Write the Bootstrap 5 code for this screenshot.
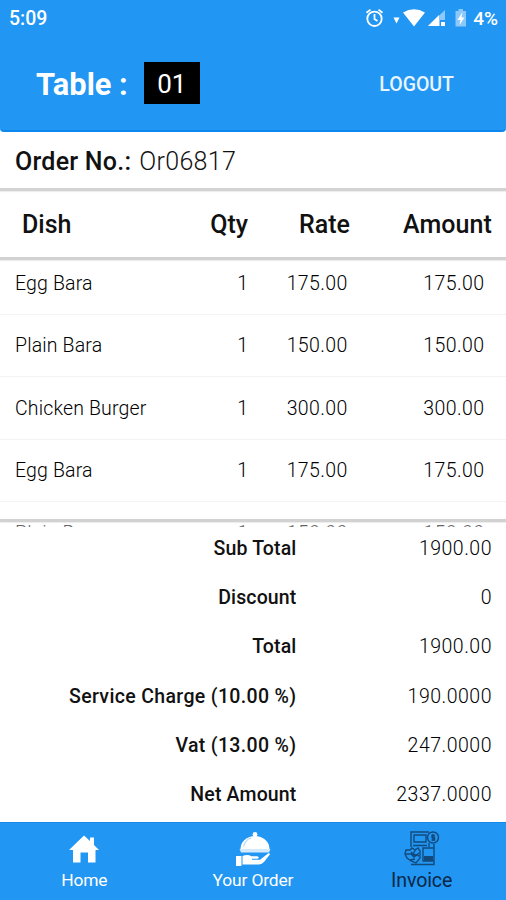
<!DOCTYPE html>
<html lang="en">
<head>
<meta charset="utf-8">
<meta name="viewport" content="width=device-width, initial-scale=1">
<title>Invoice</title>
<link href="https://cdn.jsdelivr.net/npm/bootstrap@5.3.0/dist/css/bootstrap.min.css" rel="stylesheet">
<style>
body{font-family:Roboto,"Liberation Sans",sans-serif;color:#111;background:#fff;line-height:1}
.screen{width:506px;height:900px}
.blue{background:#2196f3;color:#fff}
.status{height:35px;padding:2px 8px 0 9px;font-size:19.5px;font-weight:500}
.status .charge{font-size:19px}
.topbar{height:97px;padding:5px 52px 0 36px;border-bottom:2px solid #0d87f0;border-radius:0 0 4px 4px}
.title{font-size:30.8px;font-weight:700}
.table-no{background:#000;width:56px;height:42px;font-size:26px;margin:-5px 0 0 16px;padding-top:2px}
.logout{font-size:19.5px;font-weight:500;color:#e9f5ff}
.order-no{height:56px;padding:2px 15px 0;font-size:25px}
.order-no b{font-weight:500;letter-spacing:.25px}
.order-no span{font-weight:300;letter-spacing:.3px}
.rule{background:#d2d2d2;height:3px;box-shadow:0 1px 1px #ececec}
.cols{display:grid;grid-template-columns:150px 98px 102px 1fr;text-align:right}
.cols>:first-child{text-align:left}
.heads{height:66px;padding:1px 14px 0 0;font-size:25px;font-weight:500;align-items:center}
.heads>:first-child{padding-left:22px}
.heads>:last-child{letter-spacing:.1px}
.lines{height:259px}
.dish{height:62.35px;flex:none;padding:1px 21.5px 0 15px;grid-template-columns:135px 98.5px 99.3px 1fr;font-size:19.5px;font-weight:300;letter-spacing:.4px;align-items:center;border-bottom:1px solid #f3f3f3;color:#000}
.dish:first-child{height:55px;padding-bottom:7px}
.dish>:first-child{letter-spacing:.15px}
.peek{height:5px;opacity:.6}
.peek .dish{height:23px;border:0;padding-bottom:0}
.sums{height:295px}
.sum{height:49.1px;padding:0 14px 5px 0;font-size:19.5px}
.sum b{width:296.5px;text-align:right;font-weight:500;letter-spacing:.15px}
.sum b.rated{letter-spacing:.35px}
.sum span{font-weight:300;letter-spacing:.5px;color:#000}
.tabs{height:78px;border-top:1px solid #1689e8;font-size:17.4px}
.tab{width:33.333%;padding-top:7px}
.tab span{letter-spacing:-.15px}
.tab svg{display:block;margin-bottom:4px}
.tab.current{color:#0a2846;font-size:19.6px}
.tab.current svg{margin-bottom:3px}
</style>
<script src="https://cdn.jsdelivr.net/npm/bootstrap@5.3.0/dist/js/bootstrap.bundle.min.js"></script>
</head>
<body>
<div class="screen d-flex flex-column overflow-hidden">
  <header>
    <div class="status blue d-flex align-items-center justify-content-between">
      <span>5:09</span>
      <div class="d-flex align-items-center">
        <svg width="108" height="24" viewBox="0 0 108 24">
          <g fill="none" stroke="#fff" stroke-width="1.8"><circle cx="9.500" cy="11.800" r="7.200"/><path d="M9.500 7v5l3 2M1.500 5.800l4-3.200M17.500 5.800l-4-3.200"/></g>
          <path fill="#fff" d="M28.500 10.500h6l-3 6zM38 5.500Q49-1 60 5.500L49 19.500z"/>
          <path fill="#8cc8fa" d="M80 3v10h-5v6h-12z"/><path fill="#fff" d="M63 19l11-11v11zM76 15h4v4h-4z"/>
          <path fill="#8cc8fa" d="M90.500 4h3V2h4.500v2h3v15.500h-10.500z"/><path fill="#fff" d="M97.500 5l-5 8h3l-1 5 5-7.500h-3z"/>
        </svg>
        <span class="charge">4%</span>
      </div>
    </div>
    <div class="topbar blue d-flex align-items-center">
      <span class="title">Table :</span>
      <span class="table-no d-flex align-items-center justify-content-center">01</span>
      <span class="logout ms-auto">LOGOUT</span>
    </div>
  </header>
  <div class="order-no d-flex align-items-center gap-2"><b>Order No.:</b><span>Or06817</span></div>
  <div class="rule"></div>
  <div class="cols heads"><span>Dish</span><span>Qty</span><span>Rate</span><span>Amount</span></div>
  <div class="rule"></div>
  <div class="lines d-flex flex-column overflow-hidden">
    <div class="cols dish"><span>Egg Bara</span><span>1</span><span>175.00</span><span>175.00</span></div>
    <div class="cols dish"><span>Plain Bara</span><span>1</span><span>150.00</span><span>150.00</span></div>
    <div class="cols dish"><span>Chicken Burger</span><span>1</span><span>300.00</span><span>300.00</span></div>
    <div class="cols dish"><span>Egg Bara</span><span>1</span><span>175.00</span><span>175.00</span></div>
  </div>
  <div class="rule"></div>
  <div class="peek overflow-hidden"><div class="cols dish"><span>Plain Bara</span><span>1</span><span>150.00</span><span>150.00</span></div></div>
  <div class="sums">
    <div class="sum d-flex align-items-center justify-content-between"><b>Sub Total</b><span>1900.00</span></div>
    <div class="sum d-flex align-items-center justify-content-between"><b>Discount</b><span>0</span></div>
    <div class="sum d-flex align-items-center justify-content-between"><b>Total</b><span>1900.00</span></div>
    <div class="sum d-flex align-items-center justify-content-between"><b class="rated">Service Charge (10.00 %)</b><span>190.0000</span></div>
    <div class="sum d-flex align-items-center justify-content-between"><b class="rated">Vat (13.00 %)</b><span>247.0000</span></div>
    <div class="sum d-flex align-items-center justify-content-between"><b>Net Amount</b><span>2337.0000</span></div>
  </div>
  <nav class="tabs blue d-flex">
    <div class="tab d-flex flex-column align-items-center">
      <svg width="36" height="38" viewBox="0 0 36 38"><path fill="#fff" d="M18 5.500l6 5.500V7.500h4V15l5 5h-3.500v12.500h-7.500V22.500h-7.500v10H7V20H3z"/></svg>
      <span>Home</span>
    </div>
    <div class="tab d-flex flex-column align-items-center">
      <svg width="36" height="38" viewBox="0 0 36 38"><g fill="#fff"><circle cx="20" cy="4.500" r="2.400"/><path d="M5.500 19a14.500 13 0 0 1 29 0z"/><path fill="#d5e9fd" d="M4.500 19h31l-1.500 3.500h-28z"/><path d="M1 26h5.500v10H1zM7.500 26q5-2 9 .2h6q2.500 1.300 0 2.600h-5.500v1h8l8-6.300q1.800-.6 2 .8l-6 7.700q-2 2-5 2.500H7.500z"/></g><path fill="none" stroke="#9bcdf8" d="M8.500 16.500q2-7 7.500-8.500"/></svg>
      <span>Your Order</span>
    </div>
    <div class="tab current d-flex flex-column align-items-center">
      <svg width="36" height="38" viewBox="0 0 36 38"><g fill="none" stroke="#124a7c" stroke-width="1.400"><path d="M25 2H7v15M25 13v4M10 5h12v7H10zM9 15.500h14M7 34.500h23V14M19 18h11v13H19z"/><circle cx="29" cy="7.500" r="5.500"/><path d="M31 5.500h-3v2h2.500v2.500h-3M29 4v7"/><path d="M2 20h4l2-2 3 2 3-2 2 3v7l-4 5-5-2-4-3-2-4zM2 24h5l3 3 5-4M7 22l4 4M6 30l5-1M12 19l-3 5 6 2"/></g><path fill="#124a7c" d="M20 26h9v5h-9z"/></svg>
      <span>Invoice</span>
    </div>
  </nav>
</div>
</body>
</html>
